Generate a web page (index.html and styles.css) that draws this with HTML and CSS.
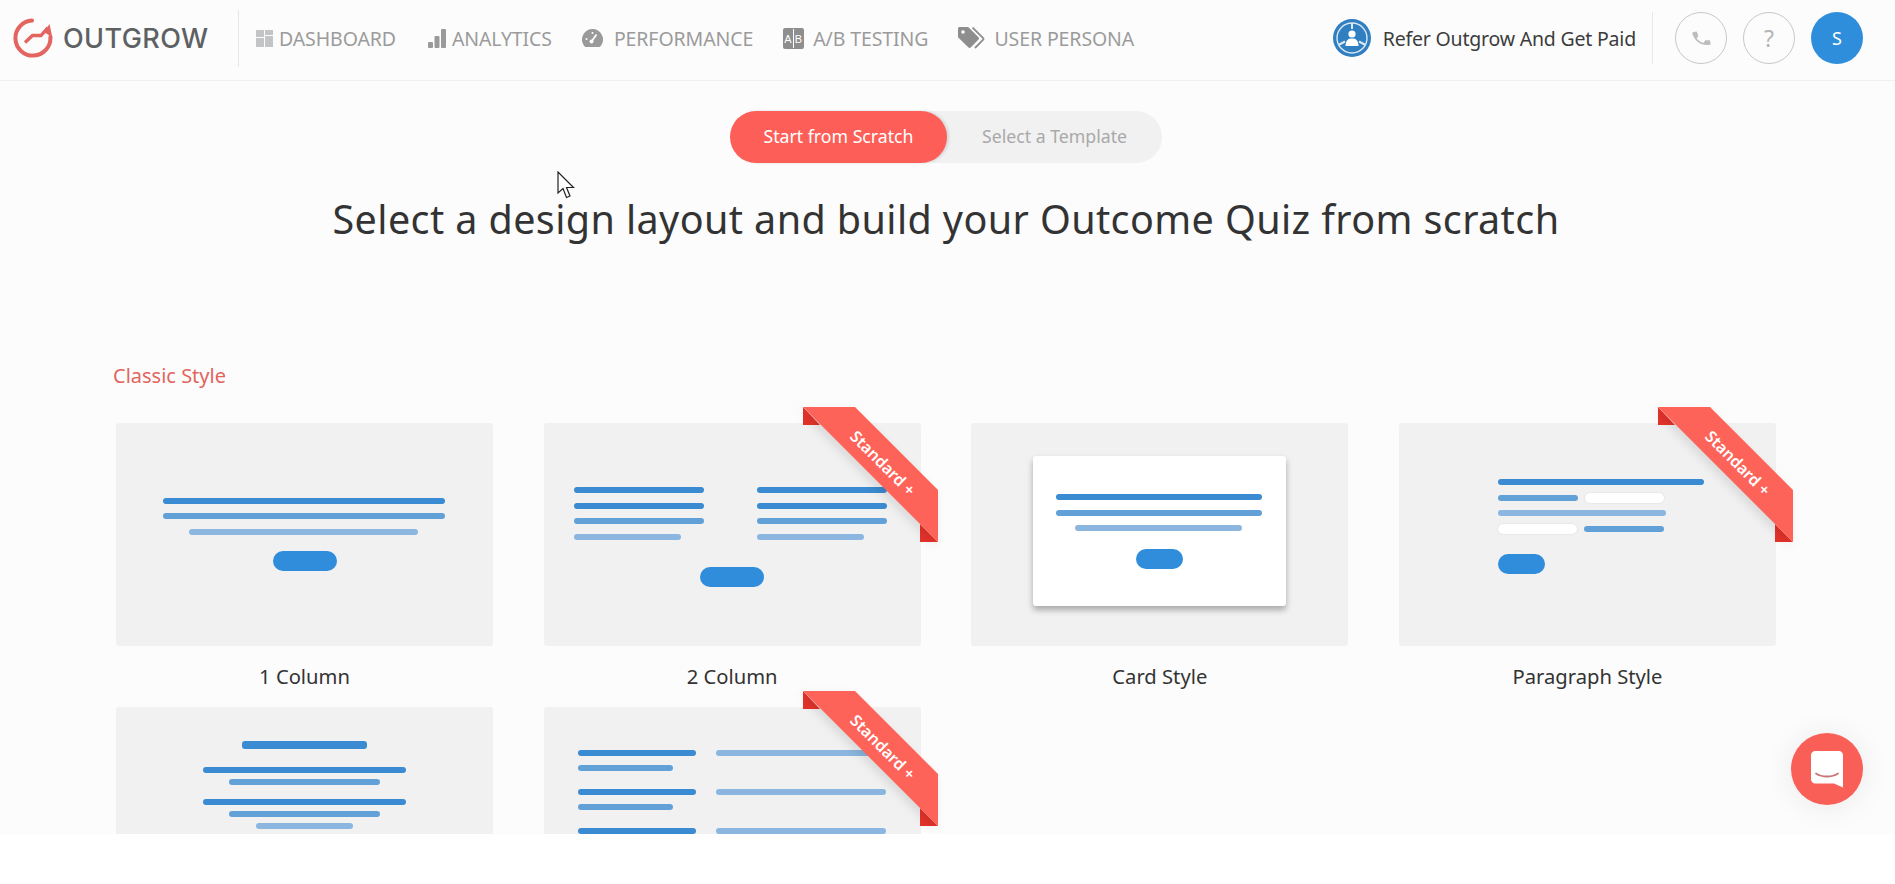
FILE: index.html
```html
<!DOCTYPE html>
<html lang="en">
<head>
    <meta charset="UTF-8">
    <meta name="viewport" content="width=device-width, initial-scale=1.0">
    <title>Outgrow</title>
    <link rel="stylesheet" href="styles.css">
</head>
<body>
    <header class="topbar">
        <div class="logo">
            <svg class="logo-icon" viewBox="0 0 40 40" width="40" height="40">
                <path d="M19 2.6A17.5 17.5 0 1 0 37.4 19" fill="none" stroke="#e4645f" stroke-width="4" stroke-linecap="round"/>
                <path d="M12 24.5l7.5-7h8.5l7-8" fill="none" stroke="#e4645f" stroke-width="3.4"/>
                <path d="M36.500 6L39.400 19.500 31 14z" fill="#e4645f"/>
            </svg>
            <span class="logo-text">OUTGROW</span>
        </div>
        <nav class="nav">
            <a class="nav-item">
                <svg width="17" height="17" viewBox="0 0 17 17" fill="#c2c4c6"><rect width="8" height="7"/><rect x="9" width="8" height="5"/><rect y="8" width="8" height="9"/><rect x="9" y="6" width="8" height="11"/></svg>
                <span class="nav-label">DASHBOARD</span>
            </a>
            <a class="nav-item">
                <svg width="19" height="19" viewBox="0 0 19 19" fill="#9a9a9a"><rect y="13" width="5" height="6" rx="1"/><rect x="6.500" y="7" width="5" height="12" rx="1"/><rect x="13" width="5" height="19" rx="1"/></svg>
                <span class="nav-label nav-tight">ANALYTICS</span>
            </a>
            <a class="nav-item">
                <svg width="21" height="19" viewBox="0 0 21 19"><path d="M10.500 0a10.500 10.500 0 0 0-8.600 16.500c.5.8 1.200 1.500 2.200 1.500h12.800c1 0 1.700-.7 2.200-1.500A10.500 10.500 0 0 0 10.500 0z" fill="#9a9a9a"/><path d="M9.500 12.500l5-7" stroke="#fff" stroke-width="1.800"/><circle cx="9.500" cy="12.500" r="2" fill="#fff"/><circle cx="4.500" cy="10" r="1" fill="#fff"/><circle cx="10.500" cy="4" r="1" fill="#fff"/></svg>
                <span class="nav-label nav-wide">PERFORMANCE</span>
            </a>
            <a class="nav-item">
                <svg width="21" height="21" viewBox="0 0 21 21"><rect width="21" height="21" rx="2" fill="#8e8e8e"/><rect x="10" y="1" width="1" height="19" fill="#fff"/><text class="ab-text" x="5" y="15">A</text><text class="ab-text" x="15.500" y="15">B</text></svg>
                <span class="nav-label nav-mid">A/B TESTING</span>
            </a>
            <a class="nav-item">
                <svg width="27" height="22" viewBox="0 0 27 22"><path d="M0 1.500C0 .7.700 0 1.500 0h8c.5 0 1 .2 1.300.5l9.700 9.700c.6.600.6 1.600 0 2.200l-7.800 8.100c-.6.600-1.600.6-2.200 0L.5 10.800C.2 10.500 0 10 0 9.500z" fill="#8e8e8e"/><path d="M14.500 0.500l10.700 10.700c.4.400.4 1 0 1.400L17 21" fill="none" stroke="#8e8e8e" stroke-width="1.800"/><circle cx="5" cy="5" r="1.800" fill="#fcfcfc"/></svg>
                <span class="nav-label nav-mid">USER PERSONA</span>
            </a>
        </nav>
        <a class="refer">
            <svg width="38" height="38" viewBox="0 0 38 38">
                <circle cx="19" cy="19" r="19" fill="#2f7fc1"/>
                <circle cx="19" cy="19" r="15" fill="none" stroke="#dbe9f5" stroke-width="1.400"/>
                <path d="M19 4v6M5.500 26l6.500-3.500M32.500 26L26 22.500" stroke="#dbe9f5" stroke-width="2"/>
                <circle cx="19" cy="15" r="3.600" fill="#fff"/>
                <path d="M12.500 27c0-5 2.500-7 4.500-7.500h4c2 .5 4.500 2.500 4.500 7.500z" fill="#fff"/>
            </svg>
            <span class="refer-text">Refer Outgrow And Get Paid</span>
        </a>
        <div class="round-btns">
            <a class="round-btn">
                <svg width="21" height="21" viewBox="0 0 24 24" fill="#bdbdbd"><path d="M6.600 10.800c1.400 2.800 3.800 5.100 6.600 6.600l2.200-2.200c.3-.3.7-.4 1-.2 1.100.4 2.300.6 3.600.6.600 0 1 .4 1 1V20c0 .6-.4 1-1 1C10.600 21 3 13.400 3 4c0-.6.4-1 1-1h3.500c.6 0 1 .4 1 1 0 1.300.2 2.500.6 3.600.1.300 0 .7-.2 1l-2.300 2.200z" transform="rotate(-12 12 12)"/></svg>
            </a>
            <a class="round-btn">?</a>
            <a class="avatar">S</a>
        </div>
    </header>

    <main class="content">
        <div class="switch">
            <a class="switch-on">Start from Scratch</a>
            <a class="switch-off">Select a Template</a>
        </div>
        <h1 class="title">Select a design layout and build your Outcome Quiz from scratch</h1>
        <h2 class="section-name">Classic Style</h2>

        <div class="layouts">
            <div class="layout">
                <div class="tile tile-center">
                    <div class="bar b1 w282"></div>
                    <div class="bar b2 w282"></div>
                    <div class="bar b3 w229"></div>
                    <div class="cta cta-wide"></div>
                </div>
                <p class="layout-name">1 Column</p>
            </div>

            <div class="layout">
                <div class="tile tile-two">
                    <div class="two-cols">
                        <div class="col">
                            <div class="bar b1 w130"></div>
                            <div class="bar b1 w130"></div>
                            <div class="bar b2 w130"></div>
                            <div class="bar b3 w107"></div>
                        </div>
                        <div class="col">
                            <div class="bar b1 w130"></div>
                            <div class="bar b1 w130"></div>
                            <div class="bar b2 w130"></div>
                            <div class="bar b3 w107"></div>
                        </div>
                    </div>
                    <div class="cta cta-wide"></div>
                    <svg class="ribbon" viewBox="0 0 135 135" width="135" height="135">
                        <path class="ribbon-fold" d="M0 0V18H17zM117 117V135H135z"/>
                        <path class="ribbon-band" d="M0 0H52L135 83V135z"/>
                        <text class="ribbon-text" transform="translate(80 56) rotate(45)">Standard +</text>
                    </svg>
                </div>
                <p class="layout-name">2 Column</p>
            </div>

            <div class="layout">
                <div class="tile tile-card">
                    <div class="card">
                        <div class="bar b1 w206"></div>
                        <div class="bar b2 w206"></div>
                        <div class="bar b3 w167"></div>
                        <div class="cta"></div>
                    </div>
                </div>
                <p class="layout-name">Card Style</p>
            </div>

            <div class="layout">
                <div class="tile tile-para">
                    <div class="bar b1 w206"></div>
                    <div class="para-row">
                        <div class="bar b2 w80"></div>
                        <div class="blank"></div>
                    </div>
                    <div class="bar b3 w168"></div>
                    <div class="para-row">
                        <div class="blank"></div>
                        <div class="bar b2 w80"></div>
                    </div>
                    <div class="cta"></div>
                    <svg class="ribbon" viewBox="0 0 135 135" width="135" height="135">
                        <path class="ribbon-fold" d="M0 0V18H17zM117 117V135H135z"/>
                        <path class="ribbon-band" d="M0 0H52L135 83V135z"/>
                        <text class="ribbon-text" transform="translate(80 56) rotate(45)">Standard +</text>
                    </svg>
                </div>
                <p class="layout-name">Paragraph Style</p>
            </div>

            <div class="layout">
                <div class="tile tile-sections">
                    <div class="bar b1 w125 bar-title"></div>
                    <div class="bar b1 w203"></div>
                    <div class="bar b2 w151"></div>
                    <div class="bar b1 w203 bar-next"></div>
                    <div class="bar b2 w151"></div>
                    <div class="bar b3 w97"></div>
                </div>
            </div>

            <div class="layout">
                <div class="tile tile-table">
                    <div class="col">
                        <div class="bar b1 w118"></div>
                        <div class="bar b2 w95"></div>
                        <div class="bar b1 w118 bar-row"></div>
                        <div class="bar b2 w95"></div>
                        <div class="bar b1 w118 bar-row"></div>
                    </div>
                    <div class="col col-wide">
                        <div class="bar b3 w170"></div>
                        <div class="bar b3 w170"></div>
                        <div class="bar b3 w170"></div>
                    </div>
                    <svg class="ribbon" viewBox="0 0 135 135" width="135" height="135">
                        <path class="ribbon-fold" d="M0 0V18H17zM117 117V135H135z"/>
                        <path class="ribbon-band" d="M0 0H52L135 83V135z"/>
                        <text class="ribbon-text" transform="translate(80 56) rotate(45)">Standard +</text>
                    </svg>
                </div>
            </div>
        </div>
    </main>

    <a class="chat">
        <svg width="32" height="37" viewBox="0 0 32 37">
            <path d="M4 0H28C30 0 32 2 32 4V36.500L23 32.500H4C2 32.500 0 30.500 0 28.500V4C0 2 2 0 4 0z" fill="#fff"/>
            <path d="M5 22.500C11 26.500 21 26.500 27 22.500" fill="none" stroke="#c9787a" stroke-width="1.800" stroke-linecap="round"/>
        </svg>
    </a>

    <svg class="pointer" width="18" height="28" viewBox="0 0 18 28">
        <path d="M1 1V22L6 17.500 9.500 26.500 13 25 9.500 16.500H16.500z" fill="#fff" stroke="#222" stroke-width="1.200"/>
    </svg>
</body>
</html>
```

FILE: styles.css
```css
html, body {
    margin: 0;
    padding: 0;
    height: 884px;
    overflow: hidden;
    background: #fff;
}
body {
    position: relative;
    font-family: "Noto Sans", "Open Sans", sans-serif;
    color: #333;
}
a {
    text-decoration: none;
    color: inherit;
}

/* top bar */
.topbar {
    display: flex;
    align-items: center;
    height: 76px;
    padding: 0 0 4px 13px;
    background: #fcfcfc;
    border-bottom: 1px solid #f0f0f0;
}
.logo {
    display: flex;
    align-items: center;
    gap: 10px;
    width: 225px;
    height: 57px;
    border-right: 1px solid #e6e8e8;
}
.logo-text {
    font-family: Inter, "Noto Sans", sans-serif;
    font-size: 27px;
    font-weight: 500;
    letter-spacing: 0.4px;
    color: #5d6163;
}
.nav {
    display: flex;
    align-items: center;
    gap: 30px;
    margin-left: 17px;
}
.nav-item {
    display: flex;
    align-items: center;
    gap: 6px;
    color: #9b9b9b;
}
.nav-item:first-child {
    margin-right: 2px;
}
.nav-label {
    font-size: 19.500px;
    letter-spacing: -0.1px;
}
.nav-tight {
    margin-left: -1px;
}
.nav-wide {
    margin-left: 5px;
}
.nav-mid {
    margin-left: 3px;
}
.ab-text {
    font-family: "Liberation Sans", sans-serif;
    font-size: 11px;
    fill: #fff;
    text-anchor: middle;
}
.refer {
    display: flex;
    align-items: center;
    gap: 12px;
    margin-left: auto;
}
.refer-text {
    font-size: 19.500px;
    letter-spacing: -0.2px;
    color: #3c3c3c;
}
.round-btns {
    display: flex;
    align-items: center;
    height: 52px;
    margin-left: 16px;
    margin-right: 32px;
    padding-left: 22px;
    gap: 16px;
    border-left: 1px solid #e6e8e8;
}
.round-btn {
    display: flex;
    align-items: center;
    justify-content: center;
    box-sizing: border-box;
    width: 52px;
    height: 52px;
    border: 1px solid #c8c8c8;
    border-radius: 50%;
    font-size: 23px;
    color: #b5b5b5;
}
.avatar {
    display: flex;
    align-items: center;
    justify-content: center;
    width: 52px;
    height: 52px;
    border-radius: 50%;
    background: #2f8edc;
    color: #fff;
    font-size: 18px;
}

/* main area, cut off above the white strip */
.content {
    height: 753px;
    padding: 0 119px 0 116px;
    overflow: hidden;
    background: #fcfcfc;
}
.switch {
    display: flex;
    width: 432px;
    height: 52px;
    margin: 30px auto 0;
    border-radius: 26px;
    background: #f1f1f1;
    font-size: 17.700px;
    line-height: 50px;
    text-align: center;
}
.switch-on {
    width: 217px;
    border-radius: 26px;
    background: #fd5f58;
    color: #fff;
    box-shadow: 2px 0 3px rgba(0, 0, 0, 0.12);
}
.switch-off {
    flex: 1;
    color: #a9a9a9;
}
.title {
    margin: 26px 0 0;
    font-size: 39.500px;
    font-weight: 400;
    line-height: 60px;
    letter-spacing: 0.4px;
    text-align: center;
    white-space: nowrap;
    color: #333;
}
.section-name {
    margin: 115px 0 35px -3px;
    font-size: 20px;
    font-weight: 400;
    line-height: 24px;
    color: #e2645c;
}

/* layout choices */
.layouts {
    display: grid;
    grid-template-columns: repeat(4, 377px);
    grid-auto-rows: 284px;
    column-gap: 50.670px;
}
.layout-name {
    margin: 0;
    font-size: 20.200px;
    line-height: 61px;
    text-align: center;
    color: #333;
}
.tile {
    position: relative;
    box-sizing: border-box;
    height: 223px;
    border-radius: 3px;
    background: #f1f1f2;
}
.bar {
    height: 6px;
    border-radius: 3px;
}
.b1 { background: #3a8bd1; }
.b2 { background: #62a0d8; }
.b3 { background: #8bb6df; }
.w80 { width: 80px; }
.w95 { width: 95px; }
.w97 { width: 97px; }
.w107 { width: 107px; }
.w118 { width: 118px; }
.w125 { width: 125px; }
.w130 { width: 130px; }
.w151 { width: 151px; }
.w167 { width: 167px; }
.w168 { width: 168px; }
.w170 { width: 170px; }
.w203 { width: 203px; }
.w206 { width: 206px; }
.w229 { width: 229px; }
.w282 { width: 282px; }
.cta {
    width: 47px;
    height: 20px;
    border-radius: 10px;
    background: #2f8ddb;
}
.cta-wide {
    width: 64px;
}
.tile-center {
    display: flex;
    flex-direction: column;
    align-items: center;
    justify-content: center;
    gap: 9.500px;
}
.tile-center .bar {
    margin-right: 2px;
}
.tile-center .cta {
    margin-top: 7px;
}
.tile-two {
    display: flex;
    flex-direction: column;
    align-items: center;
    padding-top: 64px;
}
.two-cols {
    display: flex;
    gap: 53px;
    margin-right: 3px;
}
.col {
    display: flex;
    flex-direction: column;
    gap: 9.500px;
}
.tile-two .cta {
    margin-top: 27px;
}
.tile-card {
    display: flex;
    justify-content: center;
    padding-top: 33px;
}
.card {
    display: flex;
    flex-direction: column;
    align-items: center;
    box-sizing: border-box;
    width: 253px;
    height: 150px;
    padding-top: 38px;
    gap: 9.500px;
    border-radius: 3px;
    background: #fff;
    box-shadow: 0 4px 6px rgba(0, 0, 0, 0.3);
}
.card .bar {
    margin-right: 2px;
}
.card .cta {
    margin-top: 8px;
}
.tile-para {
    display: flex;
    flex-direction: column;
    align-items: flex-start;
    gap: 9.500px;
    padding: 56px 0 0 99px;
}
.para-row {
    display: flex;
    align-items: center;
    justify-content: space-between;
    width: 166px;
    height: 6px;
}
.blank {
    width: 79px;
    height: 10px;
    border-radius: 5px;
    background: #fff;
    box-shadow: 0 0 2px rgba(0, 0, 0, 0.12);
}
.tile-para .cta {
    margin-top: 13px;
}
.tile-sections {
    display: flex;
    flex-direction: column;
    align-items: center;
    padding-top: 34px;
    gap: 6px;
}
.tile-sections .bar-title {
    height: 8px;
    margin-bottom: 12px;
}
.tile-sections .bar-next {
    margin-top: 8px;
}
.tile-table {
    display: flex;
    gap: 20px;
    padding: 43px 0 0 34px;
}
.tile-table .col {
    gap: 9px;
}
.tile-table .bar-row {
    margin-top: 9px;
}
.tile-table .col-wide {
    gap: 33px;
}
.ribbon {
    position: absolute;
    top: -16px;
    right: -17px;
    overflow: visible;
}
.ribbon-fold {
    fill: #e5332b;
}
.ribbon-band {
    fill: #fe635a;
    filter: drop-shadow(-3px 4px 5px rgba(0, 0, 0, 0.1));
}
.ribbon-text {
    font-size: 16px;
    font-weight: 600;
    fill: #fff;
    text-anchor: middle;
    dominant-baseline: central;
}

/* things lying over the page */
.chat {
    position: absolute;
    left: 1791px;
    top: 733px;
    display: flex;
    align-items: center;
    justify-content: center;
    width: 72px;
    height: 72px;
    border-radius: 50%;
    background: #fa5f57;
    box-shadow: 0 2px 30px rgba(0, 0, 0, 0.08);
}
.pointer {
    position: absolute;
    left: 557px;
    top: 171px;
}
```
